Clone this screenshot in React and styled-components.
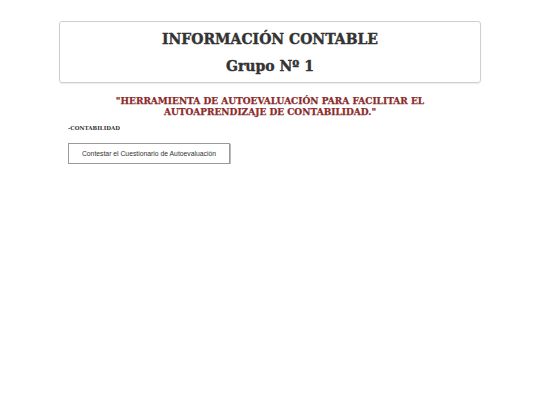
import React from "react";
import styled, { createGlobalStyle } from "styled-components";

const Global = createGlobalStyle`
  html, body { margin: 0; padding: 0; background: #fff; }
  body { font-family: "Liberation Sans", Arial, sans-serif; }
`;

const Page = styled.div`
  width: 422px;
  margin: 0 auto;
  padding-top: 21px;
`;

const Header = styled.header`
  border: 1px solid #cfcfcf;
  border-radius: 3px;
  box-shadow: 0 1px 1px rgba(0,0,0,0.08);
  height: 62px;
  box-sizing: border-box;
  display: flex;
  flex-direction: column;
  align-items: center;
  justify-content: center;
  gap: 13px;
`;

const Slab = styled.h1`
  margin: 0;
  font-family: "DejaVu Serif", serif;
  font-weight: bold;
  font-size: ${p => p.size}px;
  line-height: 1;
  color: ${p => p.color || "#333"};
  text-align: center;
  -webkit-text-stroke: 0.4px ${p => p.color || "#333"};
`;

const Quote = styled.p`
  margin: 13px 0 0;
  font-family: "DejaVu Serif", serif;
  font-weight: bold;
  font-size: 9px;
  line-height: 11px;
  color: #8b2b2b;
  text-align: center;
  -webkit-text-stroke: 0.25px #8b2b2b;
`;

const Content = styled.div`
  padding: 0 9px;
`;

const Tag = styled.div`
  margin-top: 7px;
  font-family: "DejaVu Serif", serif;
  font-weight: bold;
  font-size: 5.5px;
  color: #333;
`;

const Button = styled.button`
  display: block;
  margin-top: 12px;
  width: 162px;
  height: 21px;
  background: #fff;
  border: 1px solid #9a9a9a;
  box-shadow: 1px 1px 0 #bbb;
  font-family: "Liberation Sans", Arial, sans-serif;
  font-size: 6.8px;
  color: #333;
  padding: 0;
  cursor: pointer;
`;

export default function App() {
  return (
    <>
      <Global />
      <Page>
        <Header>
          <Slab size={14}>INFORMACIÓN CONTABLE</Slab>
          <Slab size={14}>Grupo Nº 1</Slab>
        </Header>
        <Quote>
          "HERRAMIENTA DE AUTOEVALUACIÓN PARA FACILITAR EL<br />
          AUTOAPRENDIZAJE DE CONTABILIDAD."
        </Quote>
        <Content>
          <Tag>-CONTABILIDAD</Tag>
          <Button>Contestar el Cuestionario de Autoevaluación</Button>
        </Content>
      </Page>
    </>
  );
}
